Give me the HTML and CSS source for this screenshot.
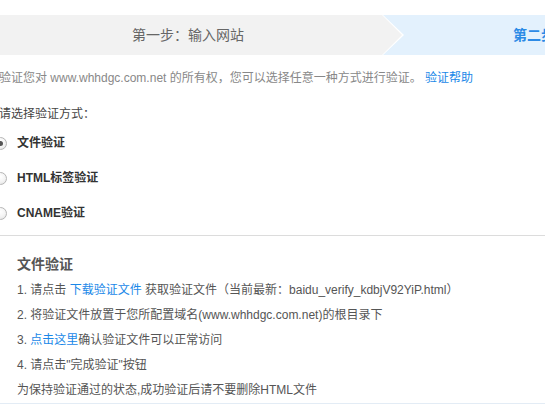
FILE: index.html
```html
<!DOCTYPE html>
<html lang="zh">
<head>
<meta charset="utf-8">
<link rel="stylesheet" href="styles.css">
</head>
<body>
<div class="steps">
  <div class="step step-done">第一步：输入网站</div>
  <div class="step step-active">第二步：验证网站</div>
</div>
<div class="page">
  <p class="intro">验证您对 www.whhdgc.com.net 的所有权，您可以选择任意一种方式进行验证。 <a class="link" href="#">验证帮助</a></p>
  <p class="choose">请选择验证方式：</p>
  <div class="options">
    <label class="option"><span class="radio checked"></span>文件验证</label>
    <label class="option"><span class="radio"></span>HTML标签验证</label>
    <label class="option"><span class="radio"></span>CNAME验证</label>
  </div>
  <div class="detail">
    <h3 class="detail-title">文件验证</h3>
    <ol class="steps-list">
      <li>1. 请点击 <a class="link" href="#">下载验证文件</a> 获取验证文件（当前最新：baidu_verify_kdbjV92YiP.html）</li>
      <li>2. 将验证文件放置于您所配置域名(www.whhdgc.com.net)的根目录下</li>
      <li>3. <a class="link" href="#">点击这里</a>确认验证文件可以正常访问</li>
      <li>4. 请点击"完成验证"按钮</li>
      <li>为保持验证通过的状态,成功验证后请不要删除HTML文件</li>
    </ol>
  </div>
</div>
</body>
</html>
```

FILE: styles.css
```css
html, body {
  margin: 0;
  padding: 0;
  background: #fff;
  overflow: hidden;
}
body {
  font-family: "Liberation Sans", Arial, "Noto Sans CJK SC", sans-serif;
  font-size: 12px;
  color: #555;
  width: 545px;
  height: 411px;
}
.steps {
  display: flex;
  margin-top: 15px;
  height: 40px;
  background: #e3f1fd;
}
.step {
  height: 40px;
  line-height: 40px;
  font-size: 14px;
  white-space: nowrap;
}
.step-done {
  position: relative;
  flex: 0 0 382px;
  background: #f2f2f2;
  color: #666;
  text-align: center;
  padding-right: 6px;
  box-sizing: border-box;
}
.step-done::before {
  content: "";
  position: absolute;
  top: -1px;
  left: 382px;
  border-top: 21px solid transparent;
  border-bottom: 21px solid transparent;
  border-left: 22px solid #fff;
}
.step-done::after {
  content: "";
  position: absolute;
  top: 0;
  left: 382px;
  border-top: 20px solid transparent;
  border-bottom: 20px solid transparent;
  border-left: 20px solid #f2f2f2;
}
.step-active {
  flex: 1;
  color: #2b8ae6;
  font-weight: bold;
  padding-left: 131px;
}
.page {
  border-bottom: 1px solid #e3ecf5;
}
.intro {
  margin: 13px 0 0 -1px;
  line-height: 20px;
  color: #888;
  white-space: nowrap;
}
.link {
  color: #1a88e8;
  text-decoration: none;
}
.choose {
  margin: 16px 0 0 -1px;
  line-height: 20px;
  color: #444;
}
.options {
  display: flex;
  flex-direction: column;
  gap: 15px;
  padding: 9px 0 12px;
  border-bottom: 1px solid #dcdcdc;
}
.option {
  display: flex;
  align-items: center;
  line-height: 20px;
  font-weight: bold;
  color: #333;
}
.radio {
  box-sizing: border-box;
  width: 13px;
  height: 13px;
  margin: 0 10px 0 -6px;
  border-radius: 50%;
  border: 1px solid #b5b5b5;
  background: radial-gradient(circle at 50% 35%, #fff 0, #f3f3f3 55%, #dedede 100%);
  display: flex;
  align-items: center;
  justify-content: center;
}
.radio.checked::after {
  content: "";
  width: 5px;
  height: 5px;
  border-radius: 50%;
  background: #555;
}
.detail {
  padding: 18px 0 0 17px;
}
.detail-title {
  margin: 0 0 4px;
  font-size: 14px;
  line-height: 20px;
  font-weight: bold;
  color: #555;
}
.steps-list {
  list-style: none;
  margin: 0;
  padding: 0;
}
.steps-list li {
  line-height: 25px;
  white-space: nowrap;
  color: #555;
}
```
